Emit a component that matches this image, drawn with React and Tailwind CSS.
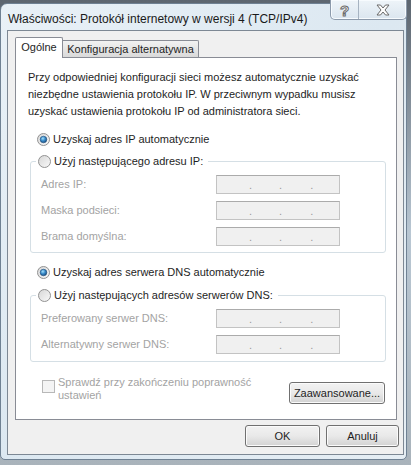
import React from "react";

function Radio({ checked }) {
  return (
    <svg width="13" height="13" viewBox="0 0 13 13" className="shrink-0">
      <defs>
        <linearGradient id="rgOuter" x1="0" y1="0" x2="1" y2="1">
          <stop offset="0" stopColor="#d6d6d6" />
          <stop offset="1" stopColor="#fafafa" />
        </linearGradient>
        <radialGradient id="rgDot" cx="0.4" cy="0.35" r="0.75">
          <stop offset="0" stopColor="#a6e0fa" />
          <stop offset="0.45" stopColor="#3a8dcc" />
          <stop offset="1" stopColor="#15406f" />
        </radialGradient>
      </defs>
      <circle cx="6.5" cy="6.5" r="6" fill="url(#rgOuter)" stroke="#929292" strokeWidth="1" />
      {checked && <circle cx="6.5" cy="6.5" r="3.3" fill="url(#rgDot)" stroke="#1c4d7c" strokeWidth="0.6" />}
    </svg>
  );
}

function IpField() {
  return (
    <div className="w-[124px] h-[19px] border border-[#c3c3c3] border-t-[#ababab] bg-[#f0f0f0] flex items-end pb-[2px] text-[#9a9a9a] leading-[12px]">
      <span className="ml-[32px]">.</span>
      <span className="ml-[27px]">.</span>
      <span className="ml-[28px]">.</span>
    </div>
  );
}

function Row({ label }) {
  return (
    <div className="flex items-center h-[19px]">
      <span className="w-[175px] text-[#a3a3a3]">{label}</span>
      <IpField />
    </div>
  );
}

function WinButton({ children, w }) {
  return (
    <div
      className={`${w} h-[22px] rounded-[3px] border border-[#707070] bg-linear-to-b from-[#f2f2f2] via-[#e9e9e9] to-[#d2d2d2] shadow-[inset_0_0_0_1px_#fbfbfb] flex items-center justify-center text-[#1e1e1e]`}
    >
      {children}
    </div>
  );
}

export default function App() {
  return (
    <div className="w-[411px] h-[465px] overflow-hidden bg-linear-to-b from-[#5d6670] via-[#b9c7d3] to-[#a9b3bb] pt-[3px] font-['Liberation_Sans',Arial,sans-serif] text-[11px] text-[#1e1e1e]">
      <div className="w-[407px] h-[457px] rounded-t-[7px] rounded-b-[5px] border border-[#6f8193] bg-linear-to-br from-[#e9f1f7] via-[#dce8f1] to-[#e6eef4] flex flex-col">
        {/* title bar */}
        <div className="h-[26px] flex items-start relative">
          <span className="ml-[7px] mt-[6px] text-[12px] text-[#1a1a1a]">
            Właściwości: Protokół internetowy w wersji 4 (TCP/IPv4)
          </span>
          <div className="ml-auto mr-[-1px] mt-[-4px] w-[77px] h-[20px] flex rounded-b-[5px] border border-[#8c9aab] border-t-0 bg-linear-to-b from-[#eef4f9] to-[#dbe6ef] shadow-[inset_0_0_0_1px_#f7fbfe]">
            <div className="w-[28px] h-full border-r border-[#a6b3c1] flex items-center justify-center">
              <span className="text-[15px] leading-[15px] font-bold text-white [-webkit-text-stroke:1px_#6b6b6b] mt-[2px]">?</span>
            </div>
            <div className="flex-1 flex items-center justify-center">
              <svg width="14" height="12" viewBox="0 0 14 12">
                <path
                  d="M1 1 H4.5 L7 4 L9.5 1 H13 L9 6 L13 11 H9.5 L7 8 L4.5 11 H1 L5 6 Z"
                  fill="#fdfdfd"
                  stroke="#6a6a6a"
                  strokeWidth="1"
                  strokeLinejoin="round"
                />
              </svg>
            </div>
          </div>
        </div>

        {/* client area */}
        <div className="ml-[6px] w-[397px] h-[425px] border border-[#7d8894] bg-[#f0f0f0] flex flex-col">
          {/* tabs */}
          <div className="flex items-end h-[26px] pl-[7px]">
            <div className="w-[48px] h-[21px] bg-white border border-[#898c95] border-b-0 rounded-t-[2px] flex items-center justify-center relative z-10 mb-[-1px] pb-[1px]">
              Ogólne
            </div>
            <div className="w-[136px] h-[17px] border border-[#898c95] border-l-0 border-b-0 rounded-tr-[2px] bg-linear-to-b from-[#f2f2f2] to-[#dadada] flex items-center justify-center">
              Konfiguracja alternatywna
            </div>
          </div>

          {/* panel */}
          <div className="ml-[7px] w-[382px] h-[363px] bg-white border border-[#898c95] flex flex-col">
            <p className="pt-[11px] pl-[12px] leading-[17px]">
              Przy odpowiedniej konfiguracji sieci możesz automatycznie uzyskać
              <br />
              niezbędne ustawienia protokołu IP. W przeciwnym wypadku musisz
              <br />
              uzyskać ustawienia protokołu IP od administratora sieci.
            </p>

            <div className="mt-[10px] h-[18px] pl-[21px] flex items-center gap-[3px]">
              <Radio checked />
              <span>Uzyskaj adres IP automatycznie</span>
            </div>

            <fieldset className="mt-[4px] ml-[14px] w-[356px] border border-[#d5dfe5] rounded-[3px] pb-[6px]">
              <legend className="ml-[5px] pl-[2px] pr-[5px] h-[18px] flex items-center gap-[3px]">
                <Radio />
                <span>Użyj następującego adresu IP:</span>
              </legend>
              <div className="pt-[5px] pl-[10px] flex flex-col gap-[7px]">
                <Row label="Adres IP:" />
                <Row label="Maska podsieci:" />
                <Row label="Brama domyślna:" />
              </div>
            </fieldset>

            <div className="mt-[10px] h-[18px] pl-[21px] flex items-center gap-[3px]">
              <Radio checked />
              <span>Uzyskaj adres serwera DNS automatycznie</span>
            </div>

            <fieldset className="mt-[5px] ml-[14px] w-[356px] border border-[#d5dfe5] rounded-[3px] pb-[7px]">
              <legend className="ml-[5px] pl-[2px] pr-[5px] h-[18px] flex items-center gap-[3px]">
                <Radio />
                <span>Użyj następujących adresów serwerów DNS:</span>
              </legend>
              <div className="pt-[5px] pl-[10px] flex flex-col gap-[7px]">
                <Row label="Preferowany serwer DNS:" />
                <Row label="Alternatywny serwer DNS:" />
              </div>
            </fieldset>

            <div className="mt-[14px] flex items-start">
              <div className="ml-[26px] mt-[4px] w-[13px] h-[13px] border border-[#b8b8b8] bg-[#f4f4f4] shrink-0" />
              <div className="ml-[3px] leading-[13px] text-[#a3a3a3] w-[200px]">
                Sprawdź przy zakończeniu poprawność
                <br />
                ustawień
              </div>
              <div className="ml-auto mr-[11px] mt-[6px]">
                <WinButton w="w-[96px]">Zaawansowane...</WinButton>
              </div>
            </div>
          </div>

          {/* bottom buttons */}
          <div className="mt-[5px] flex justify-end gap-[6px] pr-[4px]">
            <WinButton w="w-[75px]">OK</WinButton>
            <WinButton w="w-[73px]">Anuluj</WinButton>
          </div>
        </div>
      </div>
    </div>
  );
}
